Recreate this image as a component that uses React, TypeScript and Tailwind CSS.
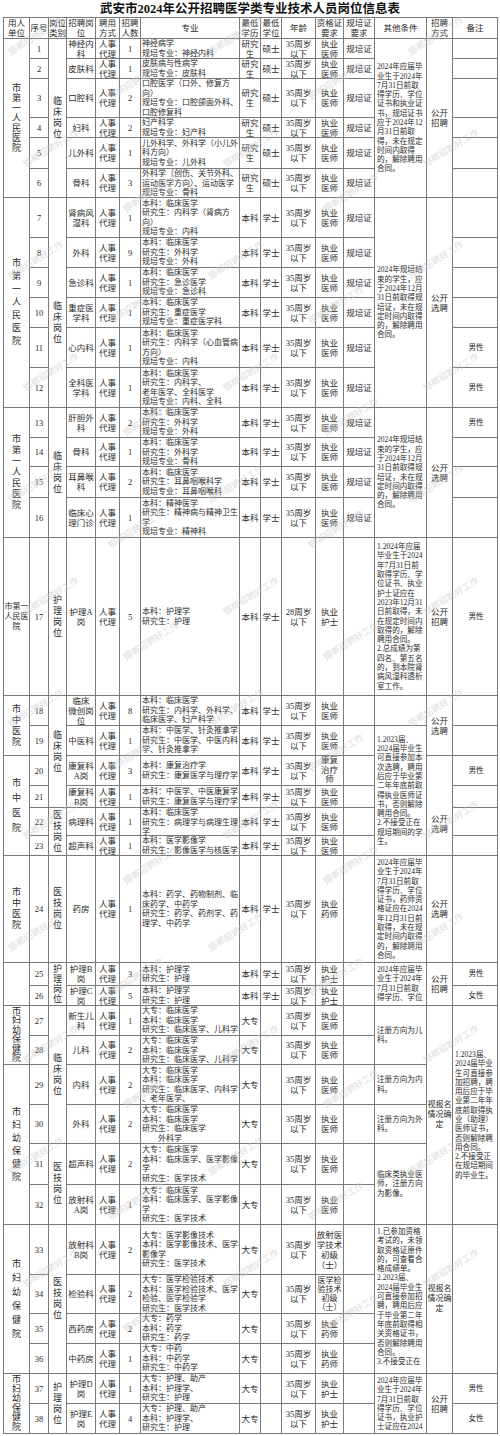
import React from "react";

type Cell = { t: string; rs?: number; al?: "l"; top?: boolean; cls?: string; sz?: string };
type Row = {
  h: number;
  c1?: Cell;
  n: string;
  c3?: Cell;
  post: string;
  way: string;
  cnt: string;
  major: string;
  edu: string;
  deg: string;
  age: string;
  cert: string;
  gp: string;
  c13?: Cell;
  c14?: Cell;
  c15?: Cell;
  certSz?: string;
};

const A = "35周岁\n以下";
const YS = "执业\n医师";
const HS = "执业\n护士";
const YAO = "执业\n药师";
const RS = "人事\n代理";
const YJS = "研究\n生";
const BK = "本科";
const DZ = "大专";
const XS = "学士";
const GP = "规培证";
const E: Cell = { t: "" };

const vert = (s: string) => s.split("").join("\n");
const unit = (s: string, rs: number, sz = "text-[9px] leading-[11px]"): Cell => ({ t: vert(s), rs, sz });
const cat = (s: string, rs: number, sz = "text-[9px] leading-[11px]", cls = ""): Cell => ({ t: vert(s), rs, sz, cls });

const O1 =
  "2024年应届毕\n业生于2024年\n7月31日前取\n得学历、学位\n证书和执业证\n书，规培证书\n应于2024年12\n月31日前取\n得，未在规定\n时间内取得\n的，解除聘用\n合同。";
const O2 =
  "2024年规培结\n束的学生，应\n于2024年12月\n31日前取得规\n培证，未在规\n定时间内取得\n的，解除聘用\n合同。";
const O3 =
  "1.2024年应届\n毕业生于2024\n年7月31日前\n取得学历、学\n位证书、执业\n护士证应在\n2023年12月31\n日前取得，未\n在规定时间内\n取得的，解除\n聘用合同。\n2.总成绩为第\n四名、第五名\n的，到本院肾\n病风湿科透析\n室工作。";
const O4 =
  "1.2023届、\n2024届毕业生\n可直接参加本\n次选聘，聘用\n后应于毕业第\n二年年底前取\n得执业医师证\n书，否则解除\n聘用合同。\n2.不接受正在\n规培期间的学\n生。";
const O5 =
  "2024年应届毕\n业生于2024年\n7月31日前取\n得学历、学位\n证书，药师资\n格证应在2024\n年12月31日前\n取得，未在规\n定时间内取得\n的，解除聘用\n合同。";
const O6 = "2024年应届毕\n业生于2024年\n7月31日前取\n得学历、学位";
const O7 =
  "1.2023届、\n2024届毕业\n生可直接参\n加招聘，聘\n用后应于毕\n业第二年年\n底前取得执\n业（助理）\n医师证书，\n否则解除聘\n用合同。\n2.不接受正\n在规培期间\n的毕业生。";
const O8 =
  "1.已参加资格\n考试的，未领\n取资格证原件\n的，可查看合\n格成绩单。\n2.2023届、\n2024届毕业生\n可直接参加招\n聘，聘用后应\n于毕业第二年\n年底前取得相\n关资格证书，\n否则解除聘用\n合同。\n3.不接受正在";
const O9 = "2024年应届毕\n业生于2024年\n7月31日前取\n得学历、学位\n证书，执业护\n士证应在2024";

const r = (
  h: number,
  n: string,
  post: string,
  cnt: string,
  major: string,
  edu: string,
  deg: string,
  cert: string,
  gp: string,
  x: Partial<Row> = {},
  age = A
): Row => ({ h, n, post, way: RS, cnt, major, edu, deg, age, cert, gp, ...x });

const rows: Row[] = [
  r(20, "1", "神经内\n科", "1", "神经病学\n规培专业：神经内科", YJS, "硕士", YS, GP, {
    c1: unit("市第一人民医院", 6, "text-[9px] leading-[10px]"),
    c3: cat("临床岗位", 6),
    c13: { t: O1, rs: 6, al: "l" },
    c14: { t: "公开\n招聘", rs: 6 },
    c15: E,
  }),
  r(20, "2", "皮肤科", "1", "皮肤病与性病学\n规培专业：皮肤科", YJS, "硕士", YS, GP, { c15: E }),
  r(39, "3", "口腔科", "2", "口腔医学（口外、修复方\n向）\n规培专业：口腔颌面外科、\n口腔修复科", YJS, "硕士", YS, GP, { c15: E }),
  r(20, "4", "妇科", "2", "妇产科学\n规培专业：妇产科", YJS, "硕士", YS, GP, { c15: E }),
  r(31, "5", "儿外科", "1", "儿外科学、外科学（小儿外\n科方向）\n规培专业：儿外科", YJS, "硕士", YS, GP, { c15: E }),
  r(29, "6", "骨科", "3", "外科学（创伤、关节外科、\n运动医学方向）、运动医学\n规培专业：骨科", YJS, "硕士", YS, GP, { c15: E }),
  r(40, "7", "肾病风\n湿科", "1", "本科：临床医学\n研究生：内科学（肾病方\n向）\n规培专业：内科", BK, XS, YS, GP, {
    c1: unit("市第一人民医院", 6, "text-[9px] leading-[13px]"),
    c3: cat("临床岗位", 6, "text-[9px] leading-[11px]", "pt-[40px]"),
    c13: { t: O2, rs: 6, al: "l" },
    c14: { t: "公开\n选聘", rs: 6 },
    c15: E,
  }),
  r(30, "8", "外科", "9", "本科：临床医学\n研究生：外科学\n规培专业：外科", BK, XS, YS, GP, { c15: E }),
  r(30, "9", "急诊科", "1", "本科：临床医学\n研究生：急诊医学\n规培专业：急诊科", BK, XS, YS, GP, { c15: E }),
  r(30, "10", "重症医\n学科", "1", "本科：临床医学\n研究生：重症医学\n规培专业：重症医学科", BK, XS, YS, GP, { c15: E }),
  r(40, "11", "心内科", "1", "本科：临床医学\n研究生：内科学（心血管病\n方向）\n规培专业：内科", BK, XS, YS, GP, { c15: { t: "男性" } }),
  r(40, "12", "全科医\n学科", "1", "本科：临床医学\n研究生：内科学、\n老年医学、全科医学\n规培专业：内科、全科", BK, XS, YS, GP, { c15: { t: "男性" } }),
  r(30, "13", "肝胆外\n科", "2", "本科：临床医学\n研究生：外科学\n规培专业：外科", BK, XS, YS, GP, {
    c1: unit("市第一人民医院", 4),
    c3: cat("临床岗位", 4),
    c13: { t: O2, rs: 4, al: "l" },
    c14: { t: "公开\n选聘", rs: 4 },
    c15: { t: "男性" },
  }),
  r(29, "14", "骨科", "1", "本科：临床医学\n研究生：外科学\n规培专业：骨科", BK, XS, YS, GP, { c15: E }),
  r(31, "15", "耳鼻喉\n科", "2", "本科：临床医学\n研究生：耳鼻咽喉科学\n规培专业：耳鼻咽喉科", BK, XS, YS, GP, { c15: E }),
  r(40, "16", "临床心\n理门诊", "1", "本科：精神医学\n研究生：精神病与精神卫生\n学\n规培专业：精神科", BK, XS, YS, GP, { c15: E }),
  r(
    158,
    "17",
    "护理A\n岗",
    "5",
    "本科：护理学\n研究生：护理",
    BK,
    XS,
    HS,
    "",
    {
      c1: { t: "市第一\n人民医\n院", sz: "text-[8px] leading-[10px]" },
      c3: cat("护理岗位", 1),
      c13: { t: O3, al: "l" },
      c14: { t: "公开\n招聘" },
      c15: { t: "男性" },
    },
    "28周岁\n以下"
  ),
  r(30, "18", "临床\n微创岗\n位", "8", "本科：临床医学\n研究生：内科学、外科学、\n临床医学、妇产科学", BK, XS, YS, "", {
    c1: unit("市中医院", 2),
    c3: cat("临床岗位", 4),
    c13: E,
    c14: { t: "公开\n选聘", rs: 2 },
    c15: E,
  }),
  r(30, "19", "中医科", "1", "本科：中医学、针灸推拿学\n研究生：中医学、中医内科\n学、针灸推拿学", BK, XS, YS, "", {
    c13: { t: O4, rs: 5, al: "l" },
    c15: E,
  }),
  r(30, "20", "康复科\nA岗", "3", "本科：康复治疗学\n研究生：康复医学与理疗学", BK, XS, "康复\n治疗\n师", "", {
    c1: unit("市中医院", 4, "text-[9px] leading-[15px]"),
    c14: { t: "公开\n选聘", rs: 4, cls: "pt-[36px]" },
    c15: { t: "男性" },
    certSz: "text-[8.5px] leading-[9.5px]",
  }),
  r(22, "21", "康复科\nB岗", "1", "本科：中医学、中医康复学\n研究生：康复医学与理疗学", BK, XS, YS, "", { c15: E }),
  r(28, "22", "病理科", "1", "本科：临床医学\n研究生：病理学与病理生理\n学", BK, XS, YS, "", {
    c3: cat("医技岗位", 2),
    c15: E,
  }),
  r(20, "23", "超声科", "1", "本科：医学影像学\n研究生：影像医学与核医学", BK, XS, YS, "", { c15: E }),
  r(107, "24", "药房", "1", "本科：药学、药物制剂、临\n床药学、中药学\n研究生：药学、药剂学、药\n理学、中药学", BK, XS, YAO, "", {
    c1: unit("市中医院", 1),
    c3: cat("医技岗位", 1),
    c13: { t: O5, al: "l", top: true },
    c14: { t: "公开\n选聘" },
    c15: E,
  }),
  r(23, "25", "护理B\n岗", "3", "本科：护理学\n研究生：护理", BK, XS, HS, "", {
    c1: { t: "", rs: 2 },
    c3: cat("护理岗位", 2, "text-[9px] leading-[10px]"),
    c13: { t: O6, rs: 2, al: "l", top: true },
    c14: { t: "公开\n招聘", rs: 2 },
    c15: { t: "男性" },
  }),
  r(20, "26", "护理C\n岗", "5", "本科：护理学\n研究生：护理", BK, XS, HS, "", { c15: { t: "女性" } }),
  r(30, "27", "新生儿\n科", "1", "大专：临床医学\n本科：临床医学\n研究生：临床医学、儿科学", DZ, "", YS, "", {
    c1: unit("市妇幼保健院", 2, "text-[9px] leading-[9.5px]"),
    c3: cat("临床岗位", 4),
    c13: { t: "注册方向为儿\n科。", rs: 2, al: "l" },
    c14: { t: "视报名\n情况确\n定", rs: 6, sz: "text-[8px] leading-[10px]" },
    c15: { t: O7, rs: 6, al: "l" },
  }),
  r(29, "28", "儿科", "2", "大专：临床医学\n本科：临床医学\n研究生：临床医学、儿科学", DZ, "", YS, ""),
  r(40, "29", "内科", "2", "大专：临床医学\n本科：临床医学\n研究生：临床医学、内科学\n、老年医学、", DZ, "", YS, "", {
    c1: unit("市妇幼保健院", 4, "text-[9px] leading-[13px]"),
    c13: { t: "注册方向为内\n科。", al: "l" },
  }),
  r(39, "30", "外科", "2", "大专：临床医学\n本科：临床医学\n研究生：临床医学\n　　外科学", DZ, "", YS, "", {
    c13: { t: "注册方向为外\n科。", al: "l" },
  }),
  r(41, "31", "超声科", "2", "大专：临床医学\n本科：临床医学、医学影像\n学\n研究生：医学技术", DZ, "", YS, "", {
    c3: cat("医技岗位", 2),
    c13: { t: "临床类执业医\n师，注册方向\n为影像。", rs: 2, al: "l" },
  }),
  r(40, "32", "放射科\nA岗", "1", "大专：临床医学\n本科：临床医学、医学影像\n学\n研究生：医学技术", DZ, "", YS, ""),
  r(50, "33", "放射科\nB岗", "2", "大专：医学影像技术\n本科：医学影像技术、医学\n影像学\n研究生：医学技术", DZ, "", "放射医\n学技术\n初级\n（士）", "", {
    c1: unit("市妇幼保健院", 4, "text-[9px] leading-[14px]"),
    c3: cat("医技岗位", 4),
    c13: { t: O8, rs: 4, al: "l", top: true },
    c14: { t: "视报名\n情况确\n定", rs: 4, sz: "text-[8px] leading-[10px]" },
    c15: { t: "", rs: 4 },
  }),
  r(39, "34", "检验科", "2", "大专：医学检验技术\n本科：医学检验技术、医学\n检验、医学检验学\n研究生：医学技术", DZ, "", "医学检\n验技术\n初级\n（士）", "", {
    certSz: "text-[8px] leading-[9px]",
  }),
  r(30, "35", "西药房", "2", "大专：药学\n本科：药学\n研究生：药学", DZ, "", YAO, ""),
  r(30, "36", "中药房", "1", "大专：中药\n本科：中药学\n研究生：中药学", DZ, "", YAO, ""),
  r(30, "37", "护理D\n岗", "1", "大专：护理、助产\n本科：护理学、\n研究生：护理", DZ, "", HS, "", {
    c1: unit("市妇幼保健院", 2, "text-[9px] leading-[9.5px]"),
    c3: cat("护理岗位", 2),
    c13: { t: O9, rs: 2, al: "l", top: true },
    c14: { t: "公开\n招聘", rs: 2 },
    c15: { t: "男性" },
  }),
  r(30, "38", "护理E\n岗", "4", "大专：护理、助产\n本科：护理学、\n研究生：护理", DZ, "", HS, "", { c15: { t: "女性" } }),
];

const widths = [
  "w-[26px]",
  "w-[19px]",
  "w-[18px]",
  "w-[29px]",
  "w-[24px]",
  "w-[21px]",
  "w-[99px]",
  "w-[21px]",
  "w-[21px]",
  "w-[34px]",
  "w-[28px]",
  "w-[31px]",
  "w-[52px]",
  "w-[26px]",
  "w-[45px]",
];

const heads = [
  "用人\n单位",
  "序号",
  "岗位\n类别",
  "招聘岗\n位",
  "聘用\n方式",
  "招聘\n人数",
  "专业",
  "最低\n学历",
  "最低\n学位",
  "年龄",
  "资格证\n要求",
  "规培证\n要求",
  "其他条件",
  "招聘\n方式",
  "备注",
];

type Kind = "c" | "v" | "m" | "o";

const kindAlign: Record<Kind, string> = {
  c: "text-center",
  v: "text-center",
  m: "text-left pl-[1px]",
  o: "pl-[2px]",
};

const kindSize: Record<Kind, string> = {
  c: "text-[8.5px] leading-[10px]",
  v: "text-[9px] leading-[11px]",
  m: "text-[8px] leading-[9.5px]",
  o: "text-[7.6px] leading-[9.3px]",
};

// faint diagonal watermark that covers the scanned sheet
function Watermarks() {
  const marks: { x: number; y: number }[] = [];
  for (let row = 0; row < 12; row++) {
    for (let col = 0; col < 5; col++) {
      marks.push({ x: 5 + col * 100 + (row % 2) * 15, y: 30 + row * 112 + (col % 2) * 45 });
    }
  }
  return (
    <div className="pointer-events-none absolute inset-0 overflow-hidden">
      {marks.map((m, i) => (
        <span
          key={i}
          className="absolute -rotate-[32deg] whitespace-nowrap text-[9px] text-[#c8c8c8] opacity-60"
          style={{ left: m.x, top: m.y }}
        >
          邯郸招聘好工作
        </span>
      ))}
    </div>
  );
}

export default function App() {
  return (
    <div className="relative h-[1436px] w-[500px] overflow-hidden bg-white font-['Liberation_Serif','Noto_Sans_CJK_SC',serif] text-[#2a2a2a]">
      <h1 className="h-[17px] text-center text-[12.5px] font-bold leading-[18px] text-[#111]">
        武安市2024年公开招聘医学类专业技术人员岗位信息表
      </h1>
      <div className="pl-[3px]">
        <table className="w-[494px] table-fixed border-collapse">
          <colgroup>
            {widths.map((w, i) => (
              <col key={i} className={w} />
            ))}
          </colgroup>
          <thead>
            <tr className="h-[21px]">
              {heads.map((h, i) => (
                <th
                  key={i}
                  className="border border-[#7a7a7a] p-0 text-center align-middle text-[8.5px] font-normal leading-[10px] whitespace-pre"
                >
                  {h}
                </th>
              ))}
            </tr>
          </thead>
          <tbody>
            {rows.map((row, i) => {
              const spanH = (c: Cell) => {
                let s = 0;
                for (let k = i; k < i + (c.rs ?? 1) && k < rows.length; k++) s += rows[k].h;
                return s;
              };
              const td = (c: Cell | undefined, key: string, kind: Kind) => {
                if (!c) return null;
                const align = kind === "o" ? (c.al === "l" ? "text-left" : "text-center") : "";
                return (
                  <td
                    key={key}
                    rowSpan={c.rs}
                    className={`border border-[#7a7a7a] p-0 ${c.top ? "align-top" : "align-middle"}`}
                  >
                    <div
                      className={`overflow-hidden whitespace-pre ${kindAlign[kind]} ${c.sz ?? kindSize[kind]} ${align} ${c.cls ?? ""} ${c.top ? "pt-[2px]" : ""}`}
                      style={{ maxHeight: spanH(c) - 1 }}
                    >
                      {c.t}
                    </div>
                  </td>
                );
              };
              return (
                <tr key={i} style={{ height: row.h }}>
                  {td(row.c1, "c1", "v")}
                  {td({ t: row.n }, "n", "c")}
                  {td(row.c3, "c3", "v")}
                  {td({ t: row.post }, "post", "c")}
                  {td({ t: row.way }, "way", "c")}
                  {td({ t: row.cnt }, "cnt", "c")}
                  {td({ t: row.major }, "major", "m")}
                  {td({ t: row.edu }, "edu", "c")}
                  {td({ t: row.deg }, "deg", "c")}
                  {td({ t: row.age }, "age", "c")}
                  {td({ t: row.cert, sz: row.certSz }, "cert", "c")}
                  {td({ t: row.gp }, "gp", "c")}
                  {td(row.c13, "c13", "o")}
                  {td(row.c14, "c14", "c")}
                  {td(row.c15, "c15", "o")}
                </tr>
              );
            })}
          </tbody>
        </table>
      </div>
      <Watermarks />
    </div>
  );
}
